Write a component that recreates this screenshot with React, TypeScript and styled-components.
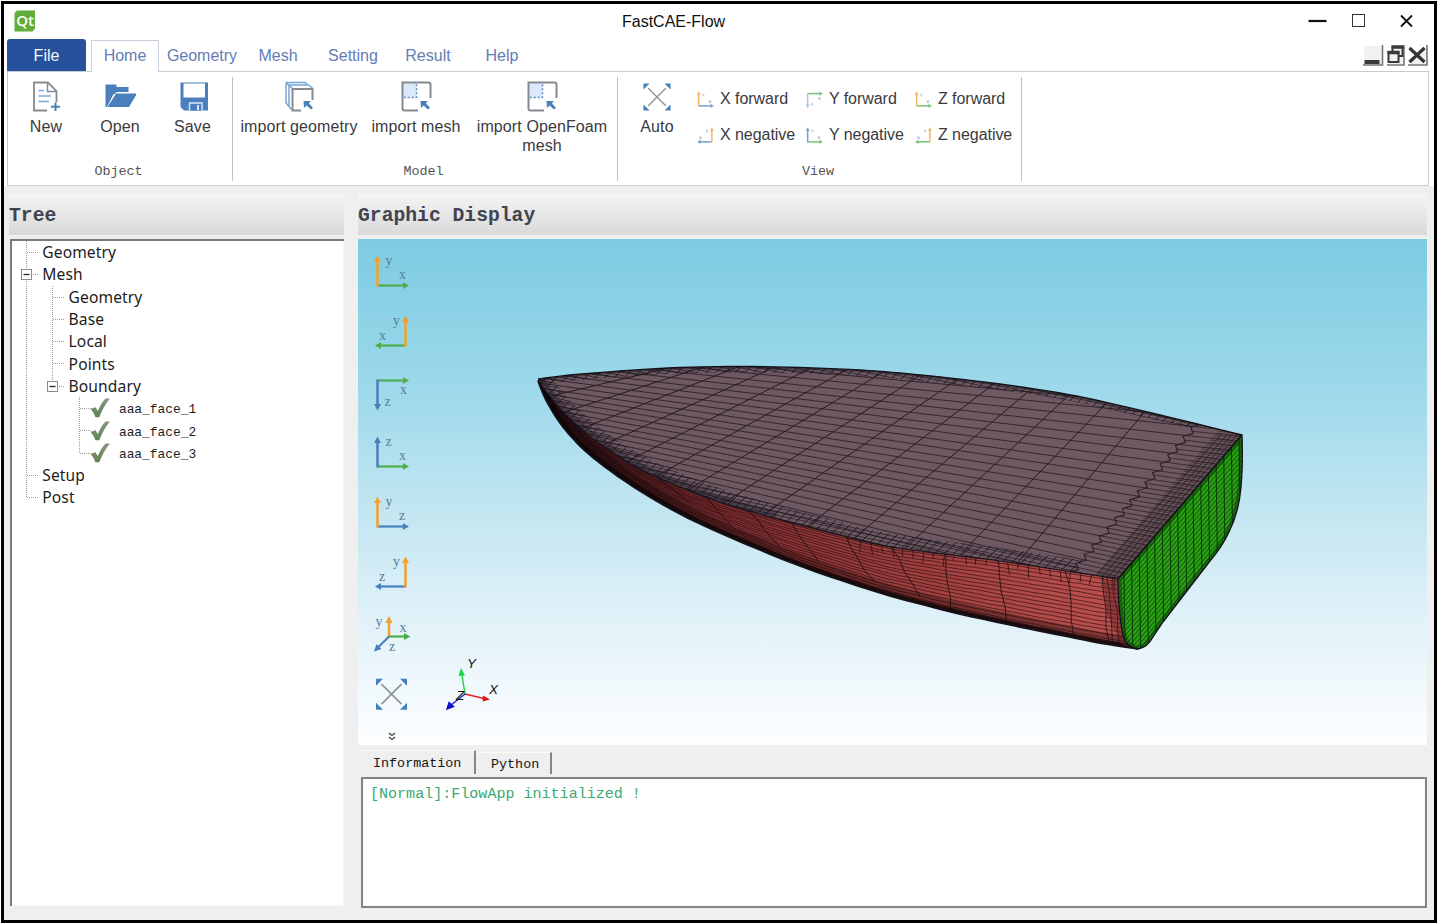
import React from "react";
import styled, { createGlobalStyle } from "styled-components";

const Global = createGlobalStyle`
  * { box-sizing: border-box; }
  html, body { margin: 0; background: #fff; overflow: hidden; }
`;

const sans = `"Liberation Sans", Arial, sans-serif`;
const mono = `"Liberation Mono", "Courier New", monospace`;

/* ---------- window frame ---------- */

const Window = styled.div`
  width: 1436px;
  height: 922px;
  margin: 1px;
  border: 3px solid #000;
  background: #fff;
  display: flex;
  flex-direction: column;
  font-family: ${sans};
  color: #3a3a3d;
`;

const TitleBar = styled.header`
  height: 35px;
  flex: none;
  display: flex;
  align-items: center;
  padding: 0 12px 1px 10px;
`;

const Title = styled.h1`
  margin: 1px auto 0 586px;
  font-size: 16px;
  font-weight: 400;
  line-height: 20px;
  color: #111;
`;

const WindowButtons = styled.div`
  display: flex;
  gap: 24px;
  align-items: center;
`;

const TabRow = styled.nav`
  height: 32px;
  flex: none;
  display: flex;
  align-items: stretch;
  padding: 0 6px 0 3px;
`;

const FileTab = styled.div`
  width: 79px;
  margin-right: 5px;
  background: #27529b;
  border-radius: 3px 3px 0 0;
  color: #f4f7ff;
  font-size: 16px;
  line-height: 34px;
  text-align: center;
`;

const Tab = styled.div<{ $w: number; $active?: boolean }>`
  width: ${(p) => p.$w}px;
  margin-top: 1px;
  margin-bottom: ${(p) => (p.$active ? -1 : 0)}px;
  border: 1px solid ${(p) => (p.$active ? "#c9cfdc" : "transparent")};
  border-bottom: 0;
  background: #fff;
  position: relative;
  color: #647cb4;
  font-size: 16px;
  line-height: 30px;
  text-align: center;
  white-space: nowrap;
`;

const MdiButtons = styled.div`
  display: flex;
  gap: 3px;
  margin: 6px 0 0 auto;
  align-items: flex-start;
`;

/* ---------- ribbon ---------- */

const Ribbon = styled.section`
  height: 115px;
  flex: none;
  margin: 0 5px 0 3px;
  border: 1px solid #c6ccd6;
  display: flex;
`;

const Group = styled.div<{ $w: number }>`
  width: ${(p) => p.$w}px;
  height: 104px;
  margin-top: 5px;
  border-right: 1px solid #bcc0c8;
  display: flex;
  flex-direction: column;
`;

const GroupBody = styled.div<{ $pad: number }>`
  height: 78px;
  flex: none;
  padding-left: ${(p) => p.$pad}px;
  display: flex;
`;

const GroupLabel = styled.div`
  flex: none;
  font-family: ${mono};
  font-size: 13.4px;
  line-height: 34px;
  height: 26px;
  margin-left: -3px;
  text-align: center;
  color: #555;
`;

const Tool = styled.div<{ $w: number }>`
  width: ${(p) => p.$w}px;
  flex: none;
  padding-top: 4px;
  display: flex;
  flex-direction: column;
  align-items: center;
  font-size: 16px;
  line-height: 19px;
  text-align: center;
  letter-spacing: 0.1px;

  svg { display: block; margin-bottom: 4px; }
`;

const ViewGrid = styled.div`
  flex: none;
  display: grid;
  grid-template-columns: 109px 109px auto;
  grid-template-rows: 36px 36px;
  margin: 4px 0 0 8px;
`;

const ViewItem = styled.div`
  display: flex;
  align-items: center;
  gap: 6px;
  font-size: 16px;
  letter-spacing: -0.05px;
  white-space: nowrap;
`;

/* ---------- body ---------- */

const Body = styled.main`
  flex: 1;
  min-height: 0;
  background: #efeff0;
  display: flex;
  gap: 14px;
  padding: 7px 7px 12px 5px;
`;

const Column = styled.div<{ $w: number }>`
  width: ${(p) => p.$w}px;
  display: flex;
  flex-direction: column;
`;

const PanelHeader = styled.h2`
  margin: 0 0 4px;
  height: 42px;
  flex: none;
  background: linear-gradient(#f6f6f6, #e8e8e8 45%, #d9d9d9);
  font-family: ${mono};
  font-size: 19.7px;
  font-weight: 700;
  line-height: 46px;
  color: #41434f;
  white-space: pre;
`;

const TreeBox = styled.div`
  height: 667px;
  margin-left: 1px;
  background: #fff;
  border: solid #7b7b7b;
  border-width: 2px 0 0 2px;
  box-shadow: inset -1px -1px #f6f6f6;
  padding: 0 0 0 2px;
`;

const TreeRow = styled.div`
  height: 22.3px;
  display: flex;
  align-items: center;
  svg { flex: none; display: block; }
`;

const TreeText = styled.span<{ $mono?: boolean }>`
  font-family: ${(p) => (p.$mono ? mono : `"Noto Sans", "Open Sans", sans-serif`)};
  font-size: ${(p) => (p.$mono ? 12.9 : 15.6)}px;
  margin-left: ${(p) => (p.$mono ? 8 : 2)}px;
  padding-top: ${(p) => (p.$mono ? 4 : 0)}px;
  letter-spacing: ${(p) => (p.$mono ? 0 : 0.1)}px;
  line-height: 22px;
  color: #1c1c1c;
`;

const Viewport = styled.div`
  position: relative;
  height: 506px;
  flex: none;
  background: linear-gradient(#7dcbe2, #9bd8ea 28%, #bde4f0 50%, #e2f2f9 76%, #fdfeff);
`;

const Scene = styled.svg`
  position: absolute;
  inset: 0;
`;

const ViewRail = styled.div`
  position: relative;
  width: 40px;
  margin-left: 14px;
  padding-top: 3px;
  display: flex;
  flex-direction: column;
  svg { display: block; flex: none; }
`;

const OutputTabs = styled.div`
  height: 32px;
  flex: none;
  display: flex;
  align-items: flex-end;
  padding: 0 0 3px 3px;
`;

const OutputTab = styled.div<{ $w: number; $h: number; $pad: number }>`
  width: ${(p) => p.$w}px;
  height: ${(p) => p.$h}px;
  border-right: 2px solid #858585;
  border-top: 1px solid #fafafa;
  font-family: ${mono};
  font-size: 13.4px;
  line-height: ${(p) => p.$h + 2}px;
  padding-left: ${(p) => p.$pad}px;
  color: #151515;
`;

const OutputBox = styled.div`
  height: 132px;
  margin-left: 3px;
  background: #fff;
  border: 2px solid #858585;
  outline: 1px solid #f8f8f8;
  outline-offset: -3px;
  padding: 6px 7px;
  font-family: ${mono};
  font-size: 15.05px;
  line-height: 18px;
  color: #3aa873;
`;

/* ---------- icons ---------- */

const BLUE = "#4a7fbd";
const ORANGE = "#f2a02c";
const GREEN = "#4fae4c";
const GREY = "#868b92";

const QtLogo = () => (
  <svg width="22" height="22" viewBox="0 0 22 22">
    <path d="M3 0.500H21V18.500L18.500 21.500H0.500V3Z" fill="#62ad3a" />
    <text x="11" y="16" textAnchor="middle" fontFamily="Open Sans" fontWeight="600" fontSize="15" fill="#fff">Qt</text>
  </svg>
);

const NewIcon = () => (
  <svg width="30" height="32" viewBox="0 0 30 32" fill="none">
    <path d="M16 29.500H3V1.500H17L25.500 10V21" stroke={GREY} strokeWidth="1.800" />
    <path d="M16.500 2V10.500H25" stroke={GREY} strokeWidth="1.500" />
    <path d="M7.500 9.500H13M7.500 15H20M7.500 20.500H18" stroke="#79aadb" strokeWidth="1.600" />
    <path d="M24.500 21.500V30M20 25.800H29" stroke={BLUE} strokeWidth="2" />
  </svg>
);

const OpenIcon = () => (
  <svg width="32" height="32" viewBox="0 0 32 32">
    <path d="M1.500 3.500H12.500V6H24.500V11H13L9 14L3 26H1.500Z" fill={BLUE} />
    <path d="M12 12.500H33L25 26H3.500Z" fill={BLUE} />
  </svg>
);

const SaveIcon = () => (
  <svg width="30" height="32" viewBox="0 0 30 32">
    <path d="M2.500 1.500H30V29.500H6L2.500 26Z" fill={BLUE} />
    <rect x="5.500" y="2.500" width="21.500" height="14" fill="#fff" />
    <path d="M11.500 29.500V22H24V29.500" fill={BLUE} stroke="#dbe9f7" strokeWidth="1.400" />
    <rect x="19" y="24" width="2" height="5" fill="#dbe9f7" />
  </svg>
);

const Pointer = () => (
  <path d="M19.500 20H27L24.800 22.300L29 26.800L27 28.600L22.600 24.400L20 27Z" fill={BLUE} />
);

const ImportGeometryIcon = () => (
  <svg width="31" height="32" viewBox="0 0 31 32" fill="none">
    <path d="M2 1.500H21L28.500 7M2 1.500V22L8 29M2 1.500L8.500 7.500M5 4H23M5 4V25" stroke="#76a5d8" strokeWidth="1.500" />
    <path d="M17 29.500H8.500V8H28.500V19" stroke={GREY} strokeWidth="2" />
    <Pointer />
  </svg>
);

const ImportMeshIcon = () => (
  <svg width="31" height="32" viewBox="0 0 31 32" fill="none">
    <rect x="2" y="2" width="13" height="14" fill="#dbe9fa" />
    <path d="M15.500 3V16.500H2" stroke="#6c9ad0" strokeWidth="1.400" strokeDasharray="2.500 1.500" />
    <path d="M17 29.500H3.500Q1.500 29.500 1.500 27.500V1.500H27.500Q29.500 1.500 29.500 3.500V17" stroke={GREY} strokeWidth="2" />
    <Pointer />
  </svg>
);

const FitIcon = ({ size = 32, w = 32, h = 32 }: { size?: number; w?: number; h?: number }) => {
  const vw = (w * 32) / size;
  const vh = (h * 32) / size;
  return (
    <svg width={w} height={h} viewBox={`${(32 - vw) / 2} ${(32 - vh) / 2} ${vw} ${vh}`}>
      <path d="M6 6L26 26M26 6L6 26" stroke="#8a9097" strokeWidth="1.500" />
      <path d="M0.500 0.500H7.500L0.500 7.500ZM31.500 0.500V7.500L24.500 0.500ZM0.500 31.500V24.500L7.500 31.500ZM31.500 31.500H24.500L31.500 24.500Z" fill={BLUE} />
    </svg>
  );
};

type Corner = "bl" | "br" | "tl";
interface AxisProps {
  corner: Corner;
  v: [string, string];
  h: [string, string];
}

const axisShapes: Record<Corner, { v: string; va: string; h: string; ha: string; vt: number[]; ht: number[] }> = {
  bl: { v: "M5.500 44.500V18", va: "M2 20L5.500 13.500L9 20Z", h: "M5.500 43.500H32", ha: "M31 40L37 43.500L31 47Z", vt: [13.500, 23.500], ht: [27, 37.500] },
  br: { v: "M33.500 44.500V18", va: "M30 20L33.500 13.500L37 20Z", h: "M33.500 43.500H8", ha: "M9 40L3 43.500L9 47Z", vt: [21, 23.500], ht: [7, 38] },
  tl: { v: "M5.500 16.500V42", va: "M2 41L5.500 47.500L9 41Z", h: "M5.500 17.500H32", ha: "M31 14L37 17.500L31 21Z", vt: [12.500, 43], ht: [28, 31] },
};

const AxisIcon = ({ corner, v, h }: AxisProps) => {
  const s = axisShapes[corner];
  return (
    <svg width="40" height="60.3" viewBox="0 0 40 60.3" fontFamily="Liberation Serif" fontSize="14" fill="#5a7f96">
      <path d={s.h} stroke={h[1]} strokeWidth="2.200" />
      <path d={s.v} stroke={v[1]} strokeWidth="2.500" />
      <path d={s.va} fill={v[1]} />
      <path d={s.ha} fill={h[1]} />
      <text x={s.vt[0]} y={s.vt[1]}>{v[0]}</text>
      <text x={s.ht[0]} y={s.ht[1]}>{h[0]}</text>
    </svg>
  );
};

const SmallAxisIcon = ({ corner, v, h }: { corner: Corner; v: string; h: string }) => {
  const s = axisShapes[corner];
  return (
    <svg width="17" height="17" viewBox="2 12 36 36" opacity="0.750">
      <path d={s.h} stroke={h} strokeWidth="3.200" />
      <path d={s.v} stroke={v} strokeWidth="3.200" />
      <path d={s.va} fill={v} stroke={v} />
      <path d={s.ha} fill={h} stroke={h} />
      <rect x={s.vt[0]} y={s.vt[1] - 6} width="4" height="6" fill="#b8c6d8" />
      <rect x={s.ht[0]} y={s.ht[1] - 6} width="5" height="6" fill="#a9b9d0" />
    </svg>
  );
};

const IsoIcon = () => (
  <svg width="40" height="60.3" viewBox="0 0 40 60.3" fontFamily="Liberation Serif" fontSize="14" fill="#5a7f96">
    <path d="M17 33V17" stroke={ORANGE} strokeWidth="2.500" />
    <path d="M13.500 19L17 12L20.500 19Z" fill={ORANGE} />
    <path d="M17 32.500H33" stroke={GREEN} strokeWidth="2.200" />
    <path d="M32 29L38.500 32.500L32 36Z" fill={GREEN} />
    <path d="M17 32.500L6 43.500" stroke={BLUE} strokeWidth="2.200" />
    <path d="M2 47.500L4.500 40L9.500 45Z" fill={BLUE} />
    <text x="3.500" y="22">y</text>
    <text x="27.500" y="28.500">x</text>
    <text x="17" y="47">z</text>
  </svg>
);

const CheckIcon = () => (
  <svg width="20" height="20" viewBox="3 -1 20 20">
    <defs>
      <linearGradient id="tick" x1="0" y1="0" x2="0" y2="1">
        <stop offset="0" stopColor="#8a9681" />
        <stop offset="1" stopColor="#5f8350" />
      </linearGradient>
    </defs>
    <path d="M1 11L6 9.300L8.300 13Q12 4.500 16 0.500H20.500Q14 8 9.800 19.300H6Q4.500 14.500 1 11Z" fill="url(#tick)" transform="translate(1.500 -1)" />
  </svg>
);

/* ---------- tree ---------- */

type Cell = "none" | "line" | "tee" | "end" | "box" | "boxEnd";

const Connector = ({ kind }: { kind: Cell }) => {
  const boxed = kind === "box" || kind === "boxEnd";
  const dots = { stroke: "#9a9a9a", strokeWidth: 1, strokeDasharray: "1 1" };
  return (
    <svg width="26.3" height="22.3" viewBox="0 0 26.3 22.3">
      {kind !== "none" && <path d={`M12.500 0V${kind === "end" || kind === "boxEnd" ? 11 : 22.3}`} {...dots} />}
      {kind !== "none" && kind !== "line" && <path d="M13 11.500H25" {...dots} />}
      {boxed && <rect x="7.500" y="6.500" width="10" height="10" fill="#fff" stroke="#8b8b8b" />}
      {boxed && <path d="M9.500 11.500H15.500" stroke="#222" strokeWidth="1.300" />}
    </svg>
  );
};

const tree: { cells: Cell[]; text: string; leaf?: boolean }[] = [
  { cells: ["tee"], text: "Geometry" },
  { cells: ["box"], text: "Mesh" },
  { cells: ["line", "tee"], text: "Geometry" },
  { cells: ["line", "tee"], text: "Base" },
  { cells: ["line", "tee"], text: "Local" },
  { cells: ["line", "tee"], text: "Points" },
  { cells: ["line", "boxEnd"], text: "Boundary" },
  { cells: ["line", "none", "tee"], text: "aaa_face_1", leaf: true },
  { cells: ["line", "none", "tee"], text: "aaa_face_2", leaf: true },
  { cells: ["line", "none", "end"], text: "aaa_face_3", leaf: true },
  { cells: ["tee"], text: "Setup" },
  { cells: ["end"], text: "Post" },
];

const Leaf = styled.span`
  display: flex;
  align-items: center;
  margin-left: -2px;
`;

/* ---------- hull mesh ---------- */

type Pt = [number, number];

/* Catmull-Rom subdivision keeps the coarse control points smooth */
const smooth = (pts: Pt[], steps = 5): Pt[] => {
  const out: Pt[] = [];
  for (let i = 0; i < pts.length - 1; i++) {
    const p0 = pts[Math.max(0, i - 1)];
    const p1 = pts[i];
    const p2 = pts[i + 1];
    const p3 = pts[Math.min(pts.length - 1, i + 2)];
    for (let s = 0; s < steps; s++) {
      const t = s / steps;
      const mix = (k: 0 | 1) =>
        0.5 * (2 * p1[k] + (p2[k] - p0[k]) * t + (2 * p0[k] - 5 * p1[k] + 4 * p2[k] - p3[k]) * t * t + (3 * p1[k] - p0[k] - 3 * p2[k] + p3[k]) * t * t * t);
      out.push([mix(0), mix(1)]);
    }
  }
  out.push(pts[pts.length - 1]);
  return out;
};

const deckTop = smooth([[538, 379], [570, 375], [620, 371], [680, 367.5], [740, 366.5], [800, 367.5], [860, 370], [900, 373], [940, 377], [1000, 384], [1060, 393], [1100, 401], [1160, 415], [1242, 435]]);
const deckLow = smooth([[538, 380], [550, 397], [570, 419], [600, 444], [640, 469], [680, 487], [720, 502], [760, 514], [800, 525], [843, 536], [880, 545], [920, 551], [960, 556], [1000, 561], [1060, 570], [1118, 579]]);
const keel = smooth([[538, 381], [546, 400], [560, 423], [580, 446], [605, 467], [640, 491], [680, 514], [720, 533], [760, 550], [800, 566], [840, 580], [880, 593], [920, 604], [960, 614], [1020, 627], [1060, 635], [1100, 643], [1138, 649]]);
const transom = "M1118 579L1242 435Q1243 465 1241 487Q1239 512 1229 532Q1222 547 1210 561L1163 622L1153 637Q1147 648 1138 649Q1127 648 1123 636Q1118 610 1118 579Z";

const toPath = (pts: Pt[]) => pts.map((p, i) => `${i ? "L" : "M"}${p[0].toFixed(1)} ${p[1].toFixed(1)}`).join("");

const yAt = (c: Pt[], x: number) => {
  for (let i = 1; i < c.length; i++) {
    if (x <= c[i][0]) {
      const [a, b] = [c[i - 1], c[i]];
      return a[1] + ((b[1] - a[1]) * (x - a[0])) / (b[0] - a[0]);
    }
  }
  return c[c.length - 1][1];
};

const noise = (n: number) => {
  const s = Math.sin(n * 127.1) * 43758.5453;
  return s - Math.floor(s) - 0.5;
};

const deckShape = toPath([...deckTop, ...[...deckLow].reverse()]) + "Z";
const hullShape = toPath([...deckLow, [1120, 620], [1138, 649], ...[...keel].reverse()]) + "Z";

/* long rows fan out from a distant point to the left */
const VP: Pt = [-150, 285];
const rowThrough = (x: number, y: number, from: number, to: number) => {
  const k = (y - VP[1]) / (x - VP[0]);
  return `M${from} ${(y + k * (from - x)).toFixed(1)}L${to} ${(y + k * (to - x)).toFixed(1)}`;
};

const deckRows = Array.from({ length: 30 }, (_, i) => rowThrough(1050, 385 + i * 8.8, 538, 1242)).join("");

const deckColumns = Array.from({ length: 14 }, (_, k) => {
  const bx = 1017 - 60 * k + 1.85 * k * k;
  const tx = 1145 - 38 * k + 0.1 * k * k;
  return toPath([[bx, yAt(deckLow, bx)], [tx, yAt(deckTop, tx)]]);
}).join("");

/* refinement bands toward the stern: stepped outline, then finer rows */
const bandSteps: Pt[] = Array.from({ length: 17 }, (_, i) => {
  const t = i / 16;
  const pair: Pt[] = [
    [1068 + 122 * t, 572 - 145 * t],
    [1078 + 122 * t, 569 - 145 * t],
  ];
  return pair;
}).flat();
const sternZone = toPath([...bandSteps, [1242, 435], [1118, 579]]) + "Z";
const sternFineZone = "M1118 579L1242 435L1219 429L1094 577Z";
const sternColumns = [6, 12, 18, 25].map((d) => `M${1118 - d} 579L${1242 - d * 0.85} 435`).join("");
const sternRows = Array.from({ length: 60 }, (_, i) => rowThrough(1050, 385 + i * 4.4, 1050, 1242)).join("");
const sternFineRows = Array.from({ length: 120 }, (_, i) => rowThrough(1050, 380 + i * 2.2, 1080, 1242)).join("");

const hullRows = Array.from({ length: 16 }, (_, i) => {
  const v = (i + 0.6) / 16;
  return toPath(
    Array.from({ length: 40 }, (_, j): Pt => {
      const x = 540 + j * 15;
      const a = yAt(deckLow, x);
      return [x, a + (yAt(keel, x) - a) * v + noise(i * 7 + j) * 0.9];
    })
  );
}).join("");

const hullRibs = [660, 705, 750, 790, 845, 892, 945, 1000, 1067, 1102, 1108, 1113]
  .map((x, n) => {
    const a = yAt(deckLow, x);
    const b = yAt(keel, x);
    const lean = x < 900 ? 28 : 6;
    return toPath([0, 0.25, 0.5, 0.75, 1].map((t, i): Pt => [x + lean * t + noise(n * 5 + i) * 4, a + (b - a) * t]));
  })
  .join("");

const hullTicks = Array.from({ length: 26 }, (_, i) => {
  const x = 850 + i * 10.5;
  return `M${x} ${yAt(deckLow, x).toFixed(1)}l${(noise(i) * 5).toFixed(1)} ${(8 + noise(i + 40) * 12).toFixed(1)}`;
}).join("");

const transomColumns = Array.from({ length: 18 }, (_, i) => `M${1122 + i * 7.8} 430l3 222`).join("");
const transomRows = Array.from({ length: 50 }, (_, i) => `M1110 ${(588 + i * 5).toFixed(1)}l140 -162`).join("");

const Hull = () => (
  <Scene width="1069" height="506" viewBox="358 239 1069 506">
    <defs>
      <clipPath id="deck"><path d={deckShape} /></clipPath>
      <clipPath id="hull"><path d={hullShape} /></clipPath>
      <clipPath id="transom"><path d={transom} /></clipPath>
      <clipPath id="stern"><path d={sternZone} /></clipPath>
      <clipPath id="sternFine"><path d={sternFineZone} /></clipPath>
      <pattern id="fine" width="8" height="3.6" patternUnits="userSpaceOnUse" patternTransform="rotate(12) skewX(-35)">
        <path d="M0 0.500H8M0.500 0V3.600" stroke="#17141c" strokeWidth="0.700" />
      </pattern>
      <linearGradient id="red" gradientUnits="userSpaceOnUse" x1="560" y1="0" x2="1120" y2="0">
        <stop offset="0" stopColor="#3a1417" />
        <stop offset="0.300" stopColor="#842f31" />
        <stop offset="0.700" stopColor="#a54241" />
        <stop offset="1" stopColor="#bd524f" />
      </linearGradient>
    </defs>

    <path d={hullShape} fill="url(#red)" />
    <g clipPath="url(#hull)" fill="none" stroke="#1c0a0c">
      <path d={hullRows} strokeWidth="0.600" />
      <path d={hullRibs} strokeWidth="0.800" />
      <path d={hullTicks} strokeWidth="0.700" />
      <path d={toPath(keel)} stroke="#120608" strokeWidth="22" opacity="0.350" />
      <path d={toPath(keel)} stroke="#0c0506" strokeWidth="8" opacity="0.800" />
      <path d="M1114 580L1118 612L1136 648" stroke="#5a2024" strokeWidth="22" opacity="0.450" />
    </g>

    <path d={deckShape} fill="#6e5862" />
    <g clipPath="url(#deck)" fill="none" stroke="#241a20">
      <path d={deckRows} strokeWidth="0.800" />
      <path d={deckColumns} strokeWidth="1" />
      <path d={toPath(deckLow)} stroke="url(#fine)" strokeWidth="26" />
      <path d={toPath(deckLow.slice(0, 38))} stroke="#1c1a24" strokeWidth="12" opacity="0.400" />
      <path d={toPath(deckTop)} stroke="url(#fine)" strokeWidth="12" />
      <path d={toPath(deckTop)} stroke="#1c1c24" strokeWidth="4" opacity="0.400" />
      <g clipPath="url(#stern)">
        <path d={sternZone} fill="#6e5862" strokeWidth="2" />
        <path d={sternRows} strokeWidth="0.700" />
        <path d={sternFineRows} strokeWidth="0.500" clipPath="url(#sternFine)" />
        <path d={sternColumns} strokeWidth="0.800" />
      </g>
    </g>

    <path d={transom} fill="#27a012" />
    <g clipPath="url(#transom)" fill="none" stroke="#082c08">
      <path d={transomRows} strokeWidth="0.700" />
      <path d={transomColumns} strokeWidth="0.900" />
      <path d={transom} strokeWidth="7" opacity="0.450" />
    </g>
    <g fill="none" stroke="#15121a" strokeLinejoin="round">
      <path d={transom} strokeWidth="1.300" />
      <path d={toPath(deckTop)} strokeWidth="1.300" />
      <path d={toPath(deckLow)} strokeWidth="1.200" />
      <path d={toPath(keel)} strokeWidth="1.800" />
    </g>

    <g strokeWidth="1.400" fontFamily="Liberation Sans" fontStyle="italic" fontSize="13.500">
      <path d="M465 694L462 675" stroke="#22d046" />
      <path d="M458.500 676L461 668L465 675.500Z" fill="#1fd544" />
      <path d="M465 694L484 698.500" stroke="#d22" />
      <path d="M483 695.500L490 699.500L482.500 701.500Z" fill="#d11" />
      <path d="M465 694L451 705" stroke="#22a" />
      <path d="M447 709L449 702.500L453.500 706.500Z" fill="#11c" stroke="#11c" />
      <text x="467" y="668" fill="#111">Y</text>
      <text x="489" y="693.500" fill="#111">X</text>
      <text x="456" y="700" fill="#111">Z</text>
    </g>
  </Scene>
);

/* ---------- page ---------- */

const App = () => (
  <>
    <Global />
    <Window>
      <TitleBar>
        <QtLogo />
        <Title>FastCAE-Flow</Title>
        <WindowButtons>
          <svg width="20" height="16"><path d="M0.500 8H18.500" stroke="#111" strokeWidth="2.200" /></svg>
          <svg width="14" height="14"><rect x="0.500" y="0.500" width="12" height="12" fill="none" stroke="#333" /></svg>
          <svg width="32" height="14"><path d="M11 1.500L22 12.500M22 1.500L11 12.500" stroke="#111" strokeWidth="1.800" /></svg>
        </WindowButtons>
      </TitleBar>

      <TabRow>
        <FileTab>File</FileTab>
        <Tab $w={68} $active>Home</Tab>
        <Tab $w={86}>Geometry</Tab>
        <Tab $w={66}>Mesh</Tab>
        <Tab $w={84}>Setting</Tab>
        <Tab $w={66}>Result</Tab>
        <Tab $w={82}>Help</Tab>
        <MdiButtons>
          <svg width="21" height="21">
            <path d="M1 1H20V20H1Z" fill="#f1f1f1" />
            <path d="M0 20H19.500V0" fill="none" stroke="#777" strokeWidth="1.600" />
            <rect x="1.500" y="15" width="15" height="4" fill="#3a3a3a" />
          </svg>
          <svg width="18" height="21">
            <path d="M0 20H17V0" fill="#f1f1f1" stroke="#777" strokeWidth="1.600" />
            <rect x="5.500" y="2" width="10" height="9" fill="#f1f1f1" stroke="#3a3a3a" strokeWidth="2" />
            <rect x="1.500" y="7.500" width="10" height="9.500" fill="#f1f1f1" stroke="#3a3a3a" strokeWidth="2" />
            <path d="M0.500 7.500H12.500M4.500 2H16.500" stroke="#3a3a3a" strokeWidth="3.500" />
          </svg>
          <svg width="20" height="21">
            <path d="M0 20H19V0" fill="#f1f1f1" stroke="#777" strokeWidth="1.600" />
            <path d="M1.500 3L16.500 17M16.500 3L1.500 17" stroke="#333" strokeWidth="3.200" />
          </svg>
        </MdiButtons>
      </TabRow>

      <Ribbon>
        <Group $w={225}>
          <GroupBody $pad={1}>
            <Tool $w={74}><NewIcon />New</Tool>
            <Tool $w={74}><OpenIcon />Open</Tool>
            <Tool $w={71}><SaveIcon />Save</Tool>
          </GroupBody>
          <GroupLabel>Object</GroupLabel>
        </Group>
        <Group $w={385}>
          <GroupBody $pad={6}>
            <Tool $w={120}><ImportGeometryIcon />import geometry</Tool>
            <Tool $w={114}><ImportMeshIcon />import mesh</Tool>
            <Tool $w={138}><ImportMeshIcon />import OpenFoam mesh</Tool>
          </GroupBody>
          <GroupLabel>Model</GroupLabel>
        </Group>
        <Group $w={404}>
          <GroupBody $pad={7}>
            <Tool $w={64}><FitIcon w={32} h={32} size={28} />Auto</Tool>
            <ViewGrid>
              <ViewItem><SmallAxisIcon corner="bl" v={ORANGE} h={BLUE} />X forward</ViewItem>
              <ViewItem><SmallAxisIcon corner="tl" v="#8fb4dc" h={GREEN} />Y forward</ViewItem>
              <ViewItem><SmallAxisIcon corner="bl" v={ORANGE} h={GREEN} />Z forward</ViewItem>
              <ViewItem><SmallAxisIcon corner="br" v={ORANGE} h={BLUE} />X negative</ViewItem>
              <ViewItem><SmallAxisIcon corner="bl" v={BLUE} h={GREEN} />Y negative</ViewItem>
              <ViewItem><SmallAxisIcon corner="br" v={ORANGE} h={GREEN} />Z negative</ViewItem>
            </ViewGrid>
          </GroupBody>
          <GroupLabel>View</GroupLabel>
        </Group>
      </Ribbon>

      <Body>
        <Column $w={335}>
          <PanelHeader>Tree</PanelHeader>
          <TreeBox>
            {tree.map((row, i) => (
              <TreeRow key={i}>
                {row.cells.map((c, j) => <Connector key={j} kind={c} />)}
                {row.leaf ? (
                  <Leaf>
                    <CheckIcon />
                    <TreeText $mono>{row.text}</TreeText>
                  </Leaf>
                ) : (
                  <TreeText>{row.text}</TreeText>
                )}
              </TreeRow>
            ))}
          </TreeBox>
        </Column>
        <Column $w={1069}>
          <PanelHeader>Graphic Display</PanelHeader>
          <Viewport>
            <Hull />
            <ViewRail>
              <AxisIcon corner="bl" v={["y", ORANGE]} h={["x", GREEN]} />
              <AxisIcon corner="br" v={["y", ORANGE]} h={["x", GREEN]} />
              <AxisIcon corner="tl" v={["z", BLUE]} h={["x", GREEN]} />
              <AxisIcon corner="bl" v={["z", BLUE]} h={["x", GREEN]} />
              <AxisIcon corner="bl" v={["y", ORANGE]} h={["z", BLUE]} />
              <AxisIcon corner="br" v={["y", ORANGE]} h={["z", BLUE]} />
              <IsoIcon />
              <FitIcon w={39} h={60.3} />
              <svg width="40" height="20" fill="none" stroke="#444" strokeWidth="1.300">
                <path d="M17 9L20 11.500L23 9M17 13L20 15.500L23 13" />
              </svg>
            </ViewRail>
          </Viewport>
          <OutputTabs>
            <OutputTab $w={115} $h={24} $pad={12}>Information</OutputTab>
            <OutputTab $w={76} $h={22} $pad={15}>Python</OutputTab>
          </OutputTabs>
          <OutputBox>[Normal]:FlowApp initialized !</OutputBox>
        </Column>
      </Body>
    </Window>
  </>
);

export default App;
